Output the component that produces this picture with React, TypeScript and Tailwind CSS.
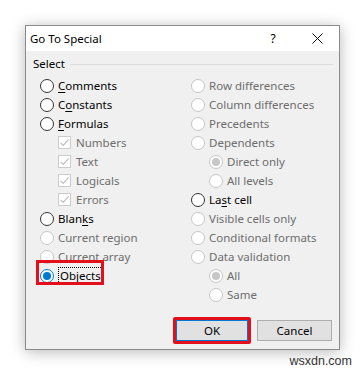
import React from "react";

const font = { fontFamily: '"Noto Sans", "Open Sans", sans-serif' };

function Radio({ checked, disabled, focus }: { checked?: boolean; disabled?: boolean; focus?: boolean }) {
  const border = focus ? "border-[#0078d7]" : disabled ? "border-[#c6c6c6]" : "border-[#333333]";
  const dot = focus ? "bg-[#0078d7]" : "bg-[#c6c6c6]";
  return (
    <span className={`flex h-[14px] w-[14px] shrink-0 items-center justify-center rounded-full border bg-white ${border}`}>
      {checked && <span className={`h-[8px] w-[8px] rounded-full ${dot}`} />}
    </span>
  );
}

function Check() {
  return (
    <span className="flex h-[13px] w-[13px] shrink-0 items-center justify-center border border-[#cccccc] bg-white">
      <svg width="11" height="11" viewBox="0 0 11 11">
        <path d="M1.5 5.8 L4.2 8.4 L9.6 2.4" fill="none" stroke="#bdbdbd" strokeWidth="1.1" />
      </svg>
    </span>
  );
}

// label with one underlined access key
function Label({ text, k, disabled }: { text: string; k?: number; disabled?: boolean }) {
  const color = disabled ? "text-[#6d6d6d]" : "text-black";
  if (k === undefined) return <span className={color}>{text}</span>;
  return (
    <span className={color}>
      {text.slice(0, k)}
      <span className="underline underline-offset-2">{text[k]}</span>
      {text.slice(k + 1)}
    </span>
  );
}

type Row = { kind: "radio" | "check"; text: string; k?: number; disabled?: boolean; checked?: boolean; indent?: boolean };

const left: Row[] = [
  { kind: "radio", text: "Comments", k: 0 },
  { kind: "radio", text: "Constants", k: 1 },
  { kind: "radio", text: "Formulas", k: 0 },
  { kind: "check", text: "Numbers", disabled: true, indent: true },
  { kind: "check", text: "Text", disabled: true, indent: true },
  { kind: "check", text: "Logicals", disabled: true, indent: true },
  { kind: "check", text: "Errors", disabled: true, indent: true },
  { kind: "radio", text: "Blanks", k: 4 },
  { kind: "radio", text: "Current region", disabled: true },
  { kind: "radio", text: "Current array", disabled: true },
];

const right: Row[] = [
  { kind: "radio", text: "Row differences", disabled: true },
  { kind: "radio", text: "Column differences", disabled: true },
  { kind: "radio", text: "Precedents", disabled: true },
  { kind: "radio", text: "Dependents", disabled: true },
  { kind: "radio", text: "Direct only", disabled: true, checked: true, indent: true },
  { kind: "radio", text: "All levels", disabled: true, indent: true },
  { kind: "radio", text: "Last cell", k: 2 },
  { kind: "radio", text: "Visible cells only", disabled: true },
  { kind: "radio", text: "Conditional formats", disabled: true },
  { kind: "radio", text: "Data validation", disabled: true },
  { kind: "radio", text: "All", disabled: true, checked: true, indent: true },
  { kind: "radio", text: "Same", disabled: true, indent: true },
];

function Item({ row }: { row: Row }) {
  return (
    <div className={`flex h-[19px] items-center ${row.indent ? "pl-[18px]" : ""} ${row.kind === "check" ? "gap-[5px]" : "gap-[4px]"}`}>
      {row.kind === "radio" ? <Radio checked={row.checked} disabled={row.disabled} /> : <Check />}
      <Label text={row.text} k={row.k} disabled={row.disabled} />
    </div>
  );
}

export default function App() {
  return (
    <div className="relative h-[374px] w-[364px] bg-white text-[11.5px] leading-none" style={font}>
      <div className="pl-[25px] pt-[25px]">
        <div className="flex h-[325px] w-[315px] flex-col border border-[#8a8a8a] bg-[#f0f0f0] shadow-[0_2px_14px_rgba(0,0,0,0.28)]">
          {/* title bar */}
          <div className="flex h-[25px] items-center bg-white pl-[4px] text-[11.5px] text-black">
            <span className="flex-1">Go To Special</span>
            <span className="w-[44px] text-center text-[12px]">?</span>
            <span className="flex w-[44px] items-center justify-center">
              <svg width="11" height="11" viewBox="0 0 11 11">
                <path d="M0.5 0.5 L10.5 10.5 M10.5 0.5 L0.5 10.5" stroke="#111" strokeWidth="1" />
              </svg>
            </span>
          </div>

          <div className="flex flex-1 flex-col px-[6px] pt-[6px]">
            {/* group header */}
            <div className="flex h-[14px] items-center gap-[5px] pl-[1px]">
              <span className="text-black">Select</span>
              <span className="h-px flex-1 bg-[#dcdcdc]" />
            </div>

            <div className="mt-[5px] grid grid-cols-[151px_1fr] pl-[8px]">
              <div className="flex flex-col">
                {left.map((r) => (
                  <Item key={r.text} row={r} />
                ))}
                <div className="relative flex h-[19px] items-center gap-[4px]">
                  <Radio checked focus />
                  <span className="border border-dotted border-black px-[1px] py-[2px] text-black">
                    O<span className="underline underline-offset-2">b</span>jects
                  </span>
                  <span className="absolute left-[-4px] top-[-6px] h-[25px] w-[68px] border-[3px] border-[#e3101b]" />
                </div>
              </div>
              <div className="flex flex-col">
                {right.map((r) => (
                  <Item key={r.text} row={r} />
                ))}
              </div>
            </div>

            {/* buttons */}
            <div className="mt-auto mb-[8px] flex justify-end gap-[9px] pr-[1px]">
              <div className="relative">
                <button className="h-[21px] w-[72px] border border-[#0078d7] bg-[#e1e1e1] text-black">OK</button>
                <span className="absolute left-[-3px] top-[-3px] h-[27px] w-[78px] rounded-[2px] border-[3px] border-[#e3101b]" />
              </div>
              <button className="h-[21px] w-[75px] border border-[#adadad] bg-[#e1e1e1] text-black">Cancel</button>
            </div>
          </div>
        </div>
      </div>
      <div
        className="absolute right-[12px] top-[355px] text-[12.5px] text-[#333]"
        style={{ fontFamily: '"Liberation Sans", Arial, sans-serif' }}
      >
        wsxdn.com
      </div>
    </div>
  );
}
